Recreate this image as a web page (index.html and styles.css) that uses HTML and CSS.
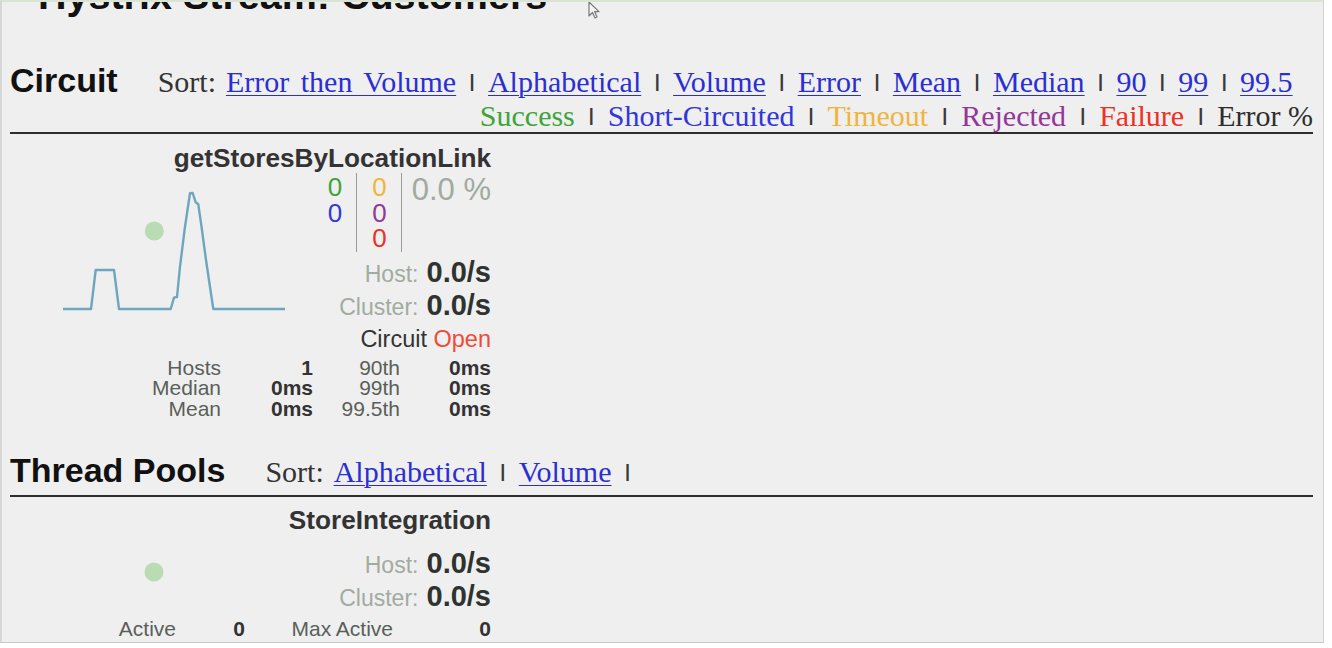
FILE: index.html
```html
<!DOCTYPE html>
<html lang="en">
<head>
<meta charset="utf-8">
<title>Hystrix Stream: Customers</title>
<link rel="stylesheet" href="styles.css">
</head>
<body>
<div class="screen">
  <svg class="cursor" width="14" height="20" viewBox="0 0 14 20"><path d="M1 1 L1 15 L4.5 11.5 L7 17 L9 16 L6.6 10.6 L11 10.6 Z" fill="#f4f4f4" stroke="#777" stroke-width="1.2" stroke-linejoin="round"/></svg>
  <div class="content">
    <h1 class="page-title">Hystrix Stream: Customers</h1>

    <section class="section">
      <div class="section-head">
        <div class="head-row">
          <h2 class="heading">Circuit</h2>
          <div class="menu">
            <span class="menu-label">Sort:</span>
            <a class="link" href="#">Error then Volume</a><span class="sep">|</span>
            <a class="link" href="#">Alphabetical</a><span class="sep">|</span>
            <a class="link" href="#">Volume</a><span class="sep">|</span>
            <a class="link" href="#">Error</a><span class="sep">|</span>
            <a class="link" href="#">Mean</a><span class="sep">|</span>
            <a class="link" href="#">Median</a><span class="sep">|</span>
            <a class="link" href="#">90</a><span class="sep">|</span>
            <a class="link" href="#">99</a><span class="sep">|</span>
            <a class="link" href="#">99.5</a>
          </div>
        </div>
        <div class="legend">
          <span class="c-success">Success</span><span class="sep">|</span>
          <span class="c-short">Short-Circuited</span><span class="sep">|</span>
          <span class="c-timeout">Timeout</span><span class="sep">|</span>
          <span class="c-rejected">Rejected</span><span class="sep">|</span>
          <span class="c-failure">Failure</span><span class="sep">|</span>
          <span class="c-error">Error %</span>
        </div>
      </div>

      <div class="card circuit-card">
        <svg class="chart" width="300" height="200" viewBox="0 0 300 200">
          <circle cx="144.3" cy="97" r="9.5" fill="#b9dcb2"/>
          <polyline fill="none" stroke="#6ea6bd" stroke-width="2.4" stroke-linejoin="round" points="53,175 81,175 85.7,136 104,136 109,175 160.7,175 164,163.7 167,163 170,132.7 175,92.7 180,59.3 182.7,59 185.7,68.3 188.3,70.3 191.7,94 196,126 203.3,175 275,175"/>
        </svg>
        <div class="card-title">getStoresByLocationLink</div>
        <div class="counters">
          <div class="count-col">
            <div class="c-success">0</div>
            <div class="c-short">0</div>
          </div>
          <div class="count-col mid">
            <div class="c-timeout">0</div>
            <div class="c-rejected">0</div>
            <div class="c-failure">0</div>
          </div>
          <div class="count-col err">0.0 %</div>
        </div>
        <div class="rate first"><span class="rate-label">Host:</span> <span class="rate-value">0.0/s</span></div>
        <div class="rate"><span class="rate-label">Cluster:</span> <span class="rate-value">0.0/s</span></div>
        <div class="status">Circuit <span class="open">Open</span></div>
        <div class="stats circuit-stats">
          <span class="lbl">Hosts</span><span class="val">1</span><span class="lbl">90th</span><span class="val">0ms</span>
          <span class="lbl">Median</span><span class="val">0ms</span><span class="lbl">99th</span><span class="val">0ms</span>
          <span class="lbl">Mean</span><span class="val">0ms</span><span class="lbl">99.5th</span><span class="val">0ms</span>
        </div>
      </div>
    </section>

    <section class="section pools">
      <div class="section-head pools-head">
        <div class="head-row">
          <h2 class="heading">Thread Pools</h2>
          <div class="menu">
            <span class="menu-label">Sort:</span>
            <a class="link" href="#">Alphabetical</a><span class="sep">|</span>
            <a class="link" href="#">Volume</a><span class="sep">|</span>
          </div>
        </div>
      </div>

      <div class="card pool-card">
        <svg class="chart" width="300" height="120" viewBox="0 0 300 120">
          <circle cx="144" cy="75" r="9.5" fill="#b9dcb2"/>
        </svg>
        <div class="card-title">StoreIntegration</div>
        <div class="rate first"><span class="rate-label">Host:</span> <span class="rate-value">0.0/s</span></div>
        <div class="rate"><span class="rate-label">Cluster:</span> <span class="rate-value">0.0/s</span></div>
        <div class="stats pool-stats">
          <span class="lbl">Active</span><span class="val">0</span><span class="lbl">Max Active</span><span class="val">0</span>
          <span class="lbl">Queued</span><span class="val">0</span><span class="lbl">Executions</span><span class="val">0</span>
          <span class="lbl">Pool Size</span><span class="val">10</span><span class="lbl">Queue Size</span><span class="val">5</span>
        </div>
      </div>
    </section>
  </div>
</div>
</body>
</html>
```

FILE: styles.css
```css
html, body {
  margin: 0;
  padding: 0;
  background: #ffffff;
}

.screen {
  position: relative;
  width: 1324px;
  height: 643px;
  box-sizing: border-box;
  background: #efefef;
  border-top: 2px solid #dbe3d5;
  border-left: 2px solid #d6d6d6;
  border-right: 1px solid #d2d2d2;
  border-bottom: 1px solid #c8c8c8;
  overflow: hidden;
  font-family: "Liberation Sans", Arial, sans-serif;
  color: #333;
}

.cursor {
  position: absolute;
  left: 586px;
  top: -1px;
}

.content {
  padding: 0 10px 0 8px;
}

.page-title {
  margin: -27px 0 0 28px;
  font-size: 39.5px;
  line-height: 40px;
  font-weight: bold;
  color: #111;
}

.section-head {
  margin-top: 45px;
  border-bottom: 2px solid #2e2e2e;
}

.pools-head {
  margin-top: 31px;
  padding-bottom: 5px;
}

.head-row {
  display: flex;
  align-items: baseline;
  column-gap: 40px;
  height: 40px;
}

.heading {
  margin: 0;
  font-size: 34px;
  line-height: 40px;
  font-weight: bold;
  color: #111;
}

.menu,
.legend {
  display: flex;
  align-items: baseline;
  column-gap: 13.4px;
  font-family: "Liberation Serif", "Times New Roman", serif;
  font-size: 30px;
  color: #333;
}

.menu {
  line-height: 40px;
}

.menu-label {
  margin-right: -3.5px;
}

.legend {
  justify-content: flex-end;
  column-gap: 14px;
  line-height: 32px;
}

.link {
  color: #2b2fd2;
  word-spacing: 4px;
  text-decoration: underline;
  text-decoration-thickness: 1px;
  text-underline-offset: 3px;
}

.sep {
  position: relative;
  top: -5px;
  font-family: "Liberation Sans", Arial, sans-serif;
  font-size: 18px;
  font-weight: bold;
  line-height: 1;
  color: #3a3a3a;
}

.c-success { color: #3ea43a; }
.c-short { color: #3237dc; }
.c-timeout { color: #efb53c; }
.c-rejected { color: #93379a; }
.c-failure { color: #ea3324; }
.c-error { color: #2e2e2e; }

.card {
  position: relative;
  width: 481px;
  display: flex;
  flex-direction: column;
  align-items: flex-end;
  text-align: right;
}

.chart {
  position: absolute;
  left: 0;
  top: 0;
}

.circuit-card {
  padding-top: 9px;
}

.pool-card {
  padding-top: 8px;
}

.card-title {
  position: relative;
  font-size: 26.2px;
  line-height: 30px;
  font-weight: bold;
  color: #333;
}

.counters {
  position: relative;
  display: flex;
  font-size: 26px;
  line-height: 25.5px;
}

.count-col {
  padding: 2px 14px 0 0;
  border-right: 1px solid #9a9a9a;
}

.count-col.mid {
  padding-left: 15px;
}

.count-col.err {
  border-right: none;
  padding: 2px 0 0 10px;
  font-size: 31px;
  line-height: 30px;
  color: #a1aaa0;
}

.rate {
  position: relative;
  font-size: 29px;
  line-height: 33px;
}

.circuit-card .rate.first {
  margin-top: 4px;
}

.pool-card .rate.first {
  margin-top: 12px;
}

.rate-label {
  font-size: 23px;
  line-height: 1;
  color: #a2aba1;
}

.rate-value {
  font-weight: bold;
  color: #2f332f;
}

.status {
  margin-top: 2px;
  font-size: 23.5px;
  line-height: 30px;
  color: #333;
}

.open {
  color: #ef4a3a;
}

.stats {
  display: grid;
  font-size: 21px;
  line-height: 20.5px;
  text-align: right;
}

.circuit-stats {
  margin-top: 4px;
  grid-template-columns: 92px 92px 87px 91px;
}

.pool-stats {
  margin-top: 6px;
  grid-template-columns: 80px 69px 148px 98px;
}

.lbl {
  color: #5a5f5a;
}

.val {
  font-weight: bold;
  color: #333;
}
```
